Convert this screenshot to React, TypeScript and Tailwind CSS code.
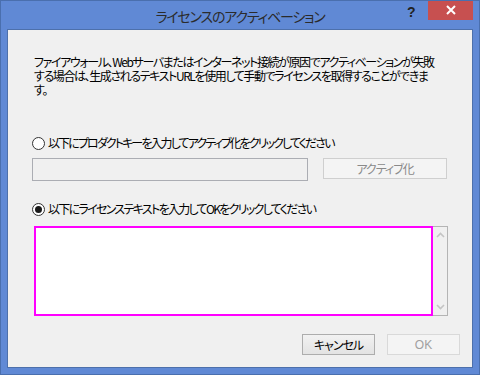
import React from "react";

const font = { fontFamily: '"Noto Sans CJK JP", "Noto Sans", sans-serif' };

function Radio({ checked }: { checked?: boolean }) {
  return (
    <span className="w-[13px] h-[13px] rounded-full border border-[#333333] bg-white flex items-center justify-center shrink-0">
      {checked && <span className="w-[7px] h-[7px] rounded-full bg-[#1a1a1a]" />}
    </span>
  );
}

export default function App() {
  return (
    <div
      className="w-[480px] h-[375px] border border-[#4a6fae] bg-[#6089d5] flex flex-col [font-feature-settings:'palt'] text-[#000] overflow-hidden"
      style={font}
    >
      <div className="h-[28px] shrink-0 grid grid-cols-[1fr_auto_1fr] items-start">
        <div />
        <div className="pt-[6px] text-[14px] leading-[18px] text-[#2b2b2b] whitespace-nowrap tracking-[-1.2px]">ライセンスのアクティベーション</div>
        <div className="flex justify-end items-start">
          <div className="w-[15px] h-[20px] text-[14px] font-bold leading-[22px] text-[#222] mr-[6px] [font-family:'Liberation_Sans',sans-serif]">?</div>
          <div className="w-[45px] h-[20px] bg-[#c75050] flex items-center justify-center mr-[6px] -mt-[1px]">
            <svg width="10" height="10" viewBox="0 0 10 10">
              <path d="M1 1L9 9M9 1L1 9" stroke="white" strokeWidth="2" />
            </svg>
          </div>
        </div>
      </div>
      <div className="mx-[6px] h-[339px] shrink-0 border border-[#4d70ab] bg-[#f0f0f0] flex flex-col pl-[24px] pr-[12px]">
        <p className="mt-[25px] ml-[2px] text-[12px] leading-[14px] tracking-[-1.4px] whitespace-nowrap">
          ファイアウォール、Webサーバまたはインターネット接続が原因でアクティベーションが失敗
          <br />
          する場合は、生成されるテキストURLを使用して手動でライセンスを取得することができま
          <br />
          す。
        </p>
        <div className="mt-[39px] flex items-center gap-[3px] text-[12px] leading-[14px] tracking-[-1.9px] whitespace-nowrap">
          <Radio />
          <span>以下にプロダクトキーを入力してアクティブ化をクリックしてください</span>
        </div>
        <div className="mt-[8px] flex items-start gap-[15px]">
          <div className="w-[276px] h-[23px] border border-[#abadb3] bg-[#f0f0f0]" />
          <div className="w-[124px] h-[21px] border border-[#cfcfcf] bg-[#f4f4f4] flex items-center justify-center text-[12px] text-[#8a8a8a] tracking-[-1px] whitespace-nowrap">
            アクティブ化
          </div>
        </div>
        <div className="mt-[21px] flex items-center gap-[3px] text-[12px] leading-[14px] tracking-[-1.7px] whitespace-nowrap">
          <Radio checked />
          <span>以下にライセンステキストを入力してOKをクリックしてください</span>
        </div>
        <div className="mt-[10px] ml-[2px] flex">
          <div className="w-[399px] h-[90px] border-2 border-[#ff00ff] bg-white" />
          <div className="w-[15px] h-[90px] border border-l-0 border-[#b4b4b4] bg-[#f0f0f0] flex flex-col justify-between items-center py-[5px]">
            <svg width="9" height="6" viewBox="0 0 9 6">
              <path d="M1 5L4.5 1.5L8 5" stroke="#c4c4c4" strokeWidth="1.6" fill="none" />
            </svg>
            <svg width="9" height="6" viewBox="0 0 9 6">
              <path d="M1 1L4.5 4.5L8 1" stroke="#c4c4c4" strokeWidth="1.6" fill="none" />
            </svg>
          </div>
        </div>
        <div className="mt-[18px] flex justify-end gap-[12px]">
          <div className="w-[73px] h-[21px] border border-[#adadad] bg-gradient-to-b from-[#f2f2f2] to-[#e3e3e3] flex items-center justify-center text-[12px] tracking-[-1px] whitespace-nowrap">
            キャンセル
          </div>
          <div className="w-[73px] h-[21px] border border-[#d9d9d9] bg-[#f4f4f4] flex items-center justify-center text-[12px] text-[#a0a0a0] [font-family:'Liberation_Sans',sans-serif]">
            OK
          </div>
        </div>
      </div>
    </div>
  );
}
